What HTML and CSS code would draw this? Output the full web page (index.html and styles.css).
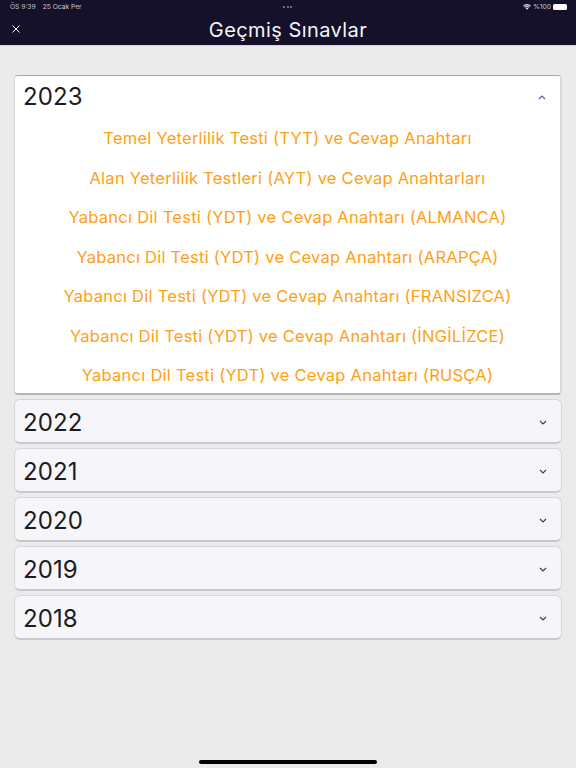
FILE: index.html
```html
<!DOCTYPE html>
<html lang="tr">
<head>
<meta charset="utf-8">
<title>Geçmiş Sınavlar</title>
<link rel="stylesheet" href="styles.css">
</head>
<body>
<header class="topbar">
  <div class="status">
    <div class="status-left"><span>ÖS 9:39</span><span>25 Ocak Per</span></div>
    <div class="status-dots"><i></i><i></i><i></i></div>
    <div class="status-right">
      <svg class="wifi" viewBox="0 0 12 9" width="8" height="6"><path d="M6 8.6 3.9 6.4a3 3 0 0 1 4.2 0zM3.1 5.6 2 4.5a5.7 5.7 0 0 1 8 0L8.9 5.6a4.2 4.2 0 0 0-5.8 0zM1.2 3.7.1 2.6a8.4 8.4 0 0 1 11.8 0L10.8 3.7a6.9 6.9 0 0 0-9.6 0z" fill="#e8e8ec"/></svg>
      <span>%100</span>
      <span class="battery"></span>
    </div>
  </div>
  <div class="nav">
    <button class="close" aria-label="Kapat">
      <svg viewBox="0 0 8 8" width="8" height="8"><path d="M.5.5l7 7M7.5.5l-7 7" stroke="#fff" stroke-width="1" fill="none"/></svg>
    </button>
    <h1>Geçmiş Sınavlar</h1>
  </div>
</header>
<main class="list">
  <section class="card open">
    <div class="card-head">
      <span class="year">2023</span>
      <svg class="chev up" viewBox="0 0 8 5" width="8" height="5"><path d="M1 4l3-3 3 3" fill="none" stroke="#5f55a8" stroke-width="1.1"/></svg>
    </div>
    <ul class="links">
      <li>Temel Yeterlilik Testi (TYT) ve Cevap Anahtarı</li>
      <li>Alan Yeterlilik Testleri (AYT) ve Cevap Anahtarları</li>
      <li>Yabancı Dil Testi (YDT) ve Cevap Anahtarı (ALMANCA)</li>
      <li>Yabancı Dil Testi (YDT) ve Cevap Anahtarı (ARAPÇA)</li>
      <li>Yabancı Dil Testi (YDT) ve Cevap Anahtarı (FRANSIZCA)</li>
      <li>Yabancı Dil Testi (YDT) ve Cevap Anahtarı (İNGİLİZCE)</li>
      <li>Yabancı Dil Testi (YDT) ve Cevap Anahtarı (RUSÇA)</li>
    </ul>
  </section>
  <section class="card"><div class="card-head"><span class="year">2022</span><svg class="chev" viewBox="0 0 8 5" width="8" height="5"><path d="M1 1l3 3 3-3" fill="none" stroke="#3c3c44" stroke-width="1.1"/></svg></div></section>
  <section class="card"><div class="card-head"><span class="year">2021</span><svg class="chev" viewBox="0 0 8 5" width="8" height="5"><path d="M1 1l3 3 3-3" fill="none" stroke="#3c3c44" stroke-width="1.1"/></svg></div></section>
  <section class="card"><div class="card-head"><span class="year">2020</span><svg class="chev" viewBox="0 0 8 5" width="8" height="5"><path d="M1 1l3 3 3-3" fill="none" stroke="#3c3c44" stroke-width="1.1"/></svg></div></section>
  <section class="card"><div class="card-head"><span class="year">2019</span><svg class="chev" viewBox="0 0 8 5" width="8" height="5"><path d="M1 1l3 3 3-3" fill="none" stroke="#3c3c44" stroke-width="1.1"/></svg></div></section>
  <section class="card"><div class="card-head"><span class="year">2018</span><svg class="chev" viewBox="0 0 8 5" width="8" height="5"><path d="M1 1l3 3 3-3" fill="none" stroke="#3c3c44" stroke-width="1.1"/></svg></div></section>
</main>
<div class="home-indicator"></div>
</body>
</html>
```
FILE: styles.css
```css
* { box-sizing: border-box; }
html, body { margin: 0; height: 100%; }
body {
  background: #ebebeb;
  font-family: Inter, Roboto, "Liberation Sans", sans-serif;
  overflow: hidden;
  position: relative;
}
.topbar { background: #15112a; height: 46px; color: #fff; border-bottom: 1px solid #d5d5d8; }
.status {
  height: 14px;
  padding: 0 9px 0 10px;
  display: flex;
  justify-content: space-between;
  align-items: center;
  font-size: 6.7px;
  color: #c9c9d0;
  position: relative;
}
.status-left { display: flex; gap: 7px; }
.status-dots { position: absolute; left: 283px; top: 6px; display: flex; gap: 1.5px; }
.status-dots i { width: 2px; height: 2px; border-radius: 50%; background: #8d8b98; display: block; }
.status-right { display: flex; align-items: center; gap: 2px; }
.battery { width: 14px; height: 6px; border-radius: 1.5px; display: block; background: #fff; }
.nav { height: 31px; display: flex; align-items: center; justify-content: center; position: relative; }
.nav h1 { margin: 0; font-size: 20px; font-weight: 400; letter-spacing: .43px; line-height: 30px; color: #f4f4f6; }
.close { position: absolute; left: 12px; top: 11px; width: 8px; height: 8px; padding: 0; border: 0; background: none; display: flex; }
.list { padding: 29px 14px 0; display: flex; flex-direction: column; gap: 4px; }
.card {
  background: #f6f5fa;
  border: 1px solid #d6d6d8;
  border-bottom: 2px solid #c9c9cc;
  border-radius: 6px;
  height: 45px;
}
.card.open {
  background: #fff;
  height: 320px;
  border-top: 1px solid #a9a9a9;
  border-left-color: #d6d6d6;
  border-right: 2px solid #d8d8d8;
  border-bottom: 2px solid #b5b5b5;
  border-radius: 4px;
}
.card-head { height: 42px; padding: 0 14px 0 8px; display: flex; align-items: center; justify-content: space-between; }
.card:not(.open) .card-head { padding-top: 2px; }
.year { font-size: 24px; letter-spacing: .1px; color: #1c1c20; line-height: 42px; }
.card:not(.open) .year { margin-top: 2px; }
.links { list-style: none; margin: 0; padding: 1px 0 0; }
.links li {
  height: 39.5px;
  line-height: 39.5px;
  text-align: center;
  font-size: 16.5px;
  letter-spacing: .25px;
  color: #ffa012;
  white-space: nowrap;
}
.home-indicator {
  position: absolute;
  left: 199px;
  top: 760px;
  width: 178px;
  height: 4px;
  background: #000;
  border-radius: 2px;
}
```
